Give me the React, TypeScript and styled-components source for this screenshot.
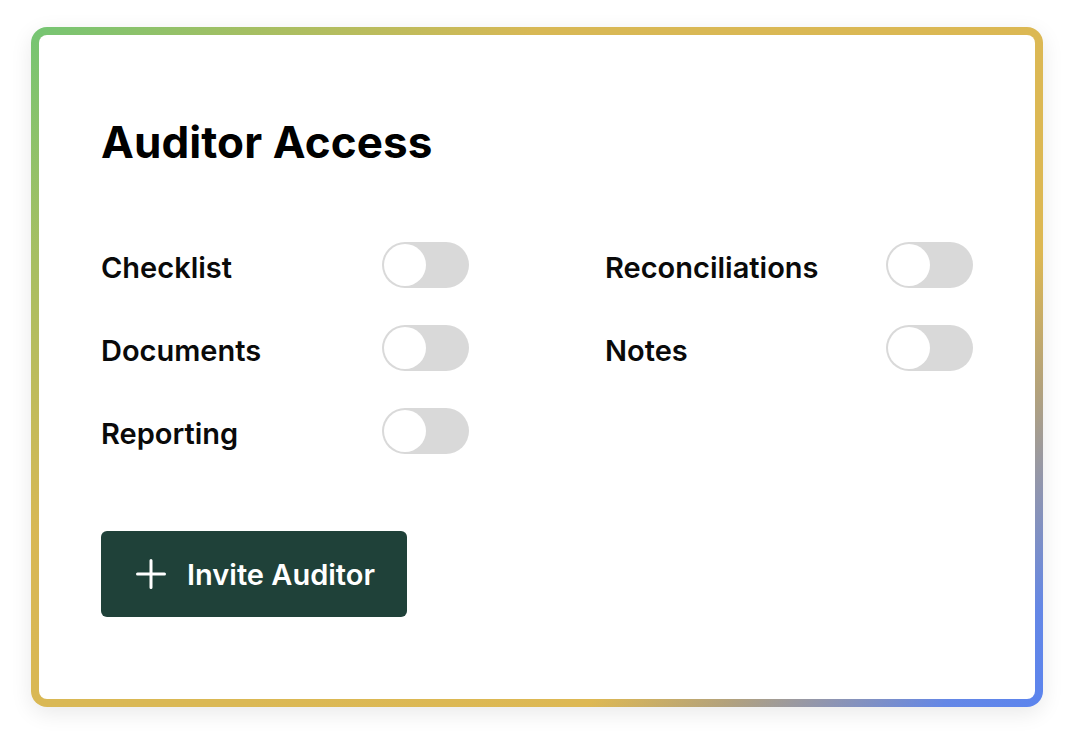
import React, { useState } from "react";
import styled, { createGlobalStyle } from "styled-components";

const GlobalStyle = createGlobalStyle`
  html, body {
    margin: 0;
    padding: 0;
    background: #ffffff;
  }
  body {
    font-family: Inter, "Noto Sans", "Liberation Sans", sans-serif;
    color: #0a0a0a;
    -webkit-font-smoothing: antialiased;
  }
`;

const Page = styled.div`
  padding: 27px 37px 41px 31px;
`;

const Card = styled.section`
  width: 1012px;
  box-sizing: border-box;
  border: 8px solid transparent;
  border-radius: 16px;
  background:
    linear-gradient(#ffffff, #ffffff) padding-box,
    linear-gradient(
        135deg,
        #74c573 0%,
        #a4bf63 13%,
        #d8b855 30%,
        #ddb853 73%,
        #b3a27c 81%,
        #8f95b0 87%,
        #6487e6 94%,
        #5b84ee 100%
      )
      border-box;
  box-shadow: 0 6px 22px rgba(0, 0, 0, 0.09);
  padding: 80px 62px 82px 62px;
`;

const Title = styled.h1`
  margin: 0;
  font-size: 44px;
  line-height: 54px;
  font-weight: 700;
  letter-spacing: 0.1px;
  color: #000;
`;

const Grid = styled.div`
  margin-top: 73px;
  display: grid;
  grid-template-columns: 368px 368px;
  column-gap: 136px;
  row-gap: 37px;
`;

const Row = styled.label`
  display: flex;
  align-items: center;
  justify-content: space-between;
  height: 46px;
  cursor: pointer;
`;

const Label = styled.span`
  font-size: 29px;
  font-weight: 600;
  line-height: 34px;
  margin-top: 5px;
  color: #0a0a0a;
`;

const Track = styled.button<{ $on: boolean }>`
  width: 87px;
  height: 46px;
  border: none;
  border-radius: 23px;
  padding: 2px;
  box-sizing: border-box;
  background: ${(p) => (p.$on ? "#1f4139" : "#d9d9d9")};
  display: flex;
  justify-content: ${(p) => (p.$on ? "flex-end" : "flex-start")};
  align-items: center;
  cursor: pointer;
`;

const Knob = styled.span`
  width: 42px;
  height: 42px;
  border-radius: 50%;
  background: #ffffff;
  display: block;
`;

const Button = styled.button`
  margin-top: 77px;
  width: 306px;
  height: 86px;
  border: none;
  border-radius: 6px;
  background: #1f4139;
  color: #ffffff;
  display: flex;
  align-items: center;
  gap: 21px;
  padding: 0 0 0 35px;
  box-sizing: border-box;
  font-family: Inter, "Noto Sans", "Liberation Sans", sans-serif;
  font-size: 29px;
  font-weight: 600;
  cursor: pointer;
`;

const items = [
  "Checklist",
  "Reconciliations",
  "Documents",
  "Notes",
  "Reporting",
];

function Toggle({ on, onClick }: { on: boolean; onClick: () => void }) {
  return (
    <Track $on={on} onClick={onClick} type="button" role="switch" aria-checked={on}>
      <Knob />
    </Track>
  );
}

export default function App() {
  const [state, setState] = useState<Record<string, boolean>>({});
  return (
    <>
      <GlobalStyle />
      <Page>
        <Card>
          <Title>Auditor Access</Title>
          <Grid>
            {items.map((it) => (
              <Row key={it}>
                <Label>{it}</Label>
                <Toggle
                  on={!!state[it]}
                  onClick={() => setState((s) => ({ ...s, [it]: !s[it] }))}
                />
              </Row>
            ))}
          </Grid>
          <Button type="button">
            <svg width="30" height="30" viewBox="0 0 30 30" fill="none">
              <path
                d="M15 1.5V28.5M1.5 15H28.5"
                stroke="#fff"
                strokeWidth="3"
                strokeLinecap="round"
              />
            </svg>
            Invite Auditor
          </Button>
        </Card>
      </Page>
    </>
  );
}
